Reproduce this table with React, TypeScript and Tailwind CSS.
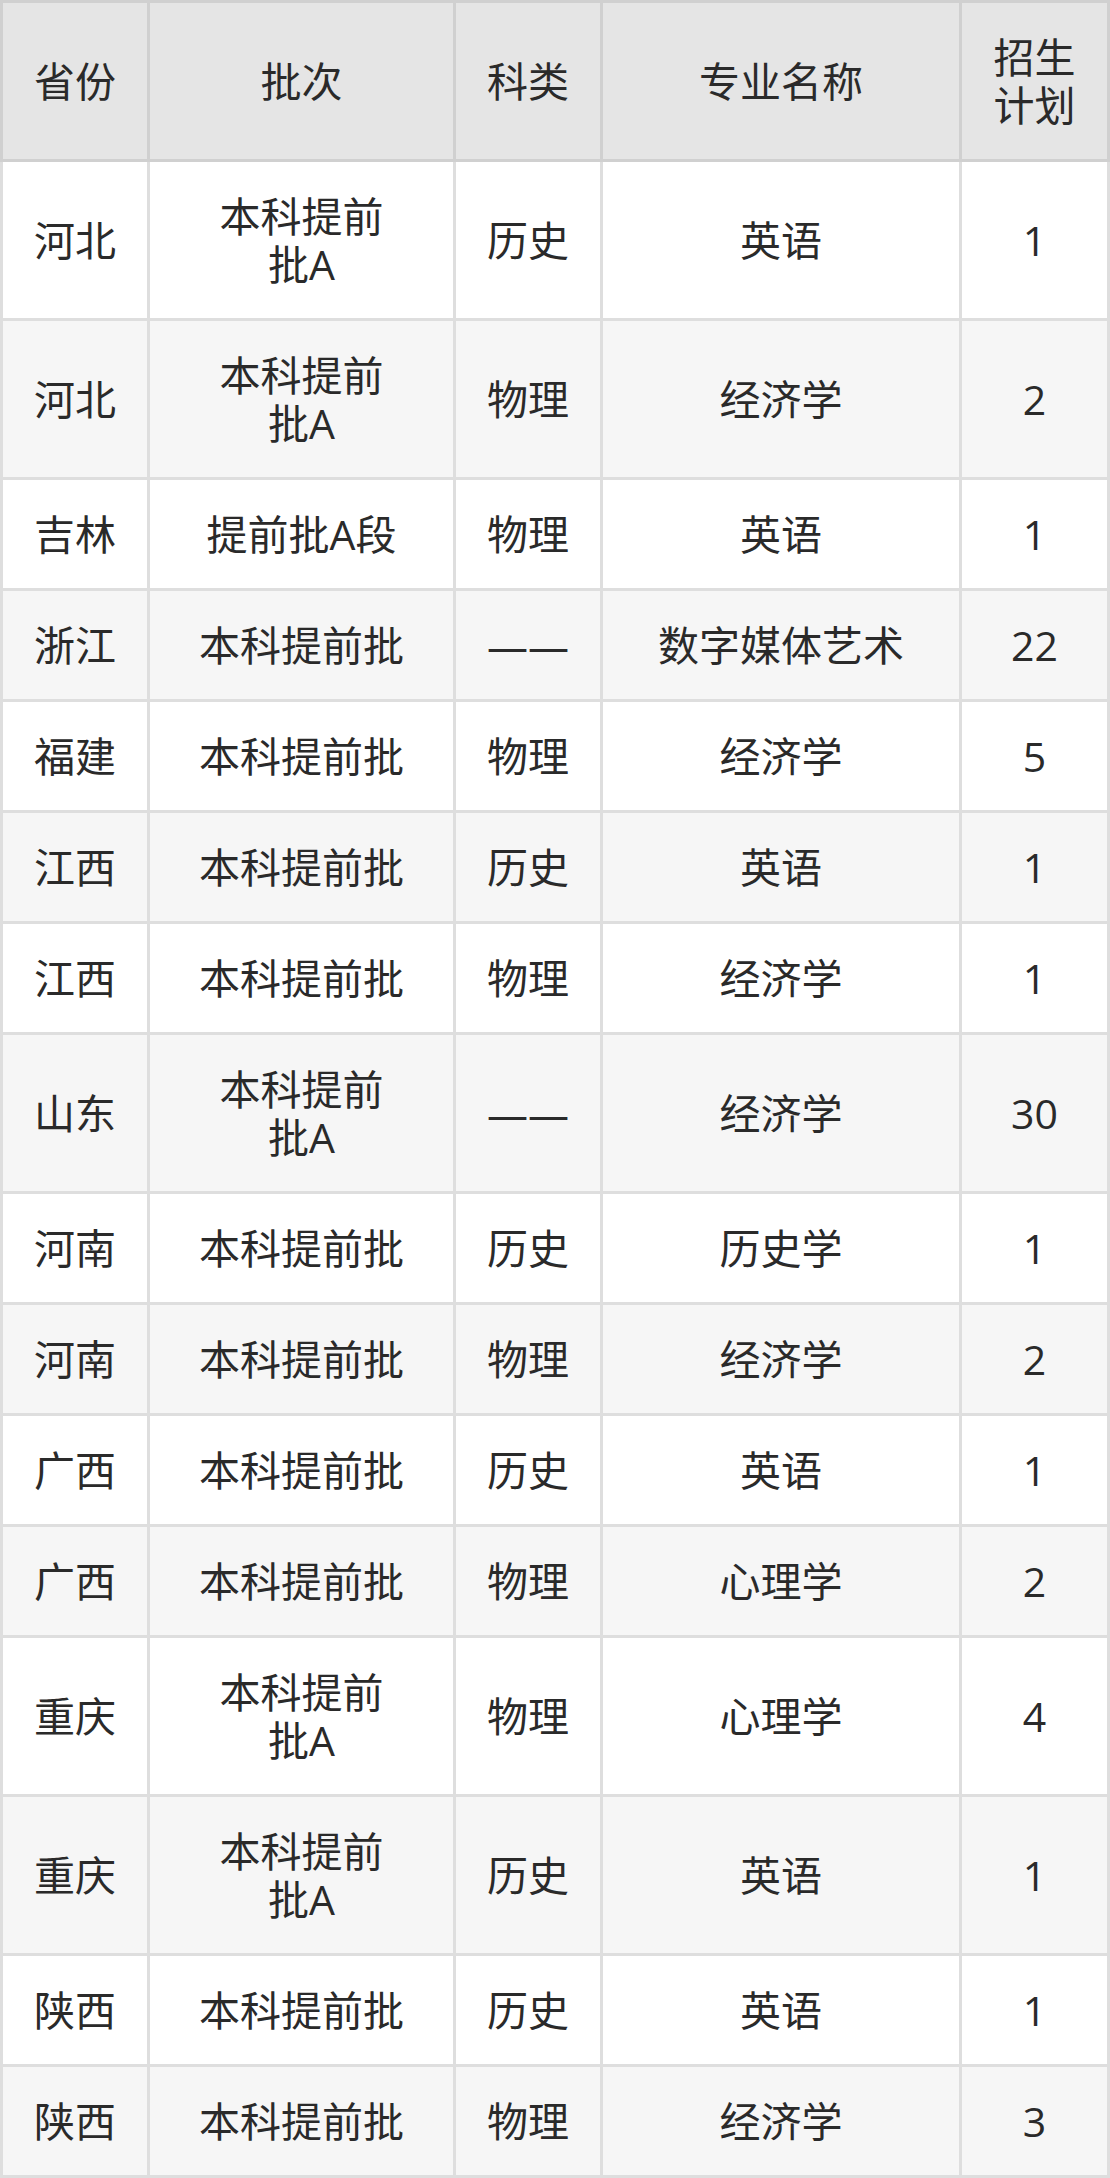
import { Fragment } from 'react';

type Row = {
	province: string;
	batch: string[];
	subject: string;
	major: string;
	plan: number;
};

// 招生计划数据
const rows: Row[] = [
	{ province: '河北', batch: ['本科提前', '批A'], subject: '历史', major: '英语', plan: 1 },
	{ province: '河北', batch: ['本科提前', '批A'], subject: '物理', major: '经济学', plan: 2 },
	{ province: '吉林', batch: ['提前批A段'], subject: '物理', major: '英语', plan: 1 },
	{ province: '浙江', batch: ['本科提前批'], subject: '——', major: '数字媒体艺术', plan: 22 },
	{ province: '福建', batch: ['本科提前批'], subject: '物理', major: '经济学', plan: 5 },
	{ province: '江西', batch: ['本科提前批'], subject: '历史', major: '英语', plan: 1 },
	{ province: '江西', batch: ['本科提前批'], subject: '物理', major: '经济学', plan: 1 },
	{ province: '山东', batch: ['本科提前', '批A'], subject: '——', major: '经济学', plan: 30 },
	{ province: '河南', batch: ['本科提前批'], subject: '历史', major: '历史学', plan: 1 },
	{ province: '河南', batch: ['本科提前批'], subject: '物理', major: '经济学', plan: 2 },
	{ province: '广西', batch: ['本科提前批'], subject: '历史', major: '英语', plan: 1 },
	{ province: '广西', batch: ['本科提前批'], subject: '物理', major: '心理学', plan: 2 },
	{ province: '重庆', batch: ['本科提前', '批A'], subject: '物理', major: '心理学', plan: 4 },
	{ province: '重庆', batch: ['本科提前', '批A'], subject: '历史', major: '英语', plan: 1 },
	{ province: '陕西', batch: ['本科提前批'], subject: '历史', major: '英语', plan: 1 },
	{ province: '陕西', batch: ['本科提前批'], subject: '物理', major: '经济学', plan: 3 }
];

const th = 'border-[3px] border-[#d0d0d0] bg-[#e5e5e5] px-[10px] py-[30px] text-center font-normal';
const td = 'border-[3px] border-[#dedede] px-[10px] py-[30px] text-center align-middle';

export default function App() {
	return (
		<div className="w-[1110px] bg-white text-[#2a2a2a] font-['Open_Sans','Noto_Sans_CJK_SC',sans-serif] text-[41px] leading-[48px]">
			<table className="w-full table-fixed border-collapse">
				<colgroup>
					<col className="w-[147px]" />
					<col className="w-[306px]" />
					<col className="w-[147px]" />
					<col className="w-[359px]" />
					<col className="w-[148px]" />
				</colgroup>
				<thead>
					<tr>
						<th className={th}>省份</th>
						<th className={th}>批次</th>
						<th className={th}>科类</th>
						<th className={th}>专业名称</th>
						<th className={th}>
							招生
							<br />
							计划
						</th>
					</tr>
				</thead>
				<tbody>
					{rows.map((row, i) => (
						<tr key={i} className={i % 2 === 1 ? 'bg-[#f6f6f6]' : 'bg-white'}>
							<td className={td}>{row.province}</td>
							<td className={td}>
								{row.batch.map((line, j) => (
									<Fragment key={j}>
										{j > 0 && <br />}
										{line}
									</Fragment>
								))}
							</td>
							<td className={td}>{row.subject}</td>
							<td className={td}>{row.major}</td>
							<td className={td}>{row.plan}</td>
						</tr>
					))}
				</tbody>
			</table>
		</div>
	);
}
